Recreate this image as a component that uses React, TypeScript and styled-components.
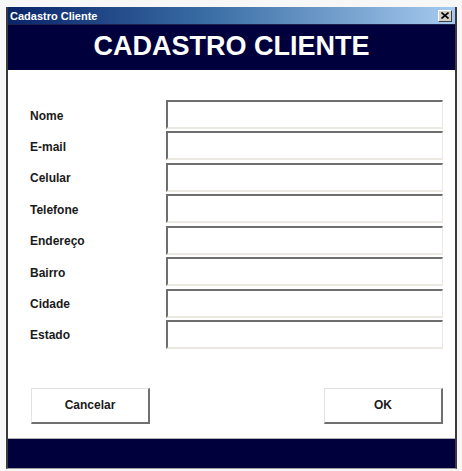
import { Fragment } from "react";
import styled, { createGlobalStyle } from "styled-components";

const GlobalStyle = createGlobalStyle`
    html, body {
        margin: 0;
        padding: 0;
        background: #ffffff;
    }
    body {
        font-family: "Liberation Sans", Arial, sans-serif;
    }
`;

const Frame = styled.div`
    width: 462px;
    height: 471px;
    padding: 7px 0 0 6px;
    box-sizing: border-box;
    background: #f7f7f7;
`;

const Window = styled.div`
    width: 451px;
    display: flex;
    flex-direction: column;
    border-left: 2px solid #3a3a3a;
    border-right: 2px solid #3a3a3a;
    border-bottom: 1px solid #a0a0a0;
    box-sizing: border-box;
    background: #ffffff;
`;

const TitleBar = styled.div`
    height: 17px;
    padding: 0 3px 0 2px;
    display: flex;
    align-items: center;
    justify-content: space-between;
    background: linear-gradient(to right, #0a246a 0%, #3a6ea5 45%, #a6caf0 100%);
`;

const TitleText = styled.span`
    color: #ffffff;
    font-size: 11px;
    font-weight: bold;
`;

const CloseButton = styled.div`
    width: 14px;
    height: 12px;
    display: flex;
    align-items: center;
    justify-content: center;
    background: #d4d0c8;
    border-top: 1px solid #ffffff;
    border-left: 1px solid #ffffff;
    border-right: 1px solid #404040;
    border-bottom: 1px solid #404040;
    box-sizing: border-box;
`;

const Header = styled.div`
    height: 46px;
    display: flex;
    align-items: center;
    justify-content: center;
    background: #00003c;
    border-top: 1px solid #20204a;
    box-sizing: border-box;
`;

const HeaderTitle = styled.h1`
    margin: 0 0 3px 0;
    color: #ffffff;
    font-size: 27px;
    font-weight: bold;
`;

const Body = styled.div`
    height: 368px;
    padding: 30px 12px 0 22px;
    box-sizing: border-box;
    display: flex;
    flex-direction: column;
`;

const Form = styled.div`
    display: grid;
    grid-template-columns: 136px 277px;
    grid-auto-rows: 29px;
    row-gap: 2.43px;
    align-items: center;
`;

const Label = styled.label`
    font-size: 12px;
    font-weight: bold;
    color: #1a1a1a;
    padding-top: 2px;
`;

const Field = styled.input`
    height: 29px;
    width: 277px;
    box-sizing: border-box;
    background: #ffffff;
    border-top: 2px solid #6e6e6e;
    border-left: 2px solid #6e6e6e;
    border-right: 1px solid #ebe9e2;
    border-bottom: 2px solid #ebe9e2;
    outline: none;
    padding: 0 4px;
    font-family: "Liberation Sans", Arial, sans-serif;
    font-size: 12px;
`;

const ButtonRow = styled.div`
    margin-top: 39px;
    padding-left: 1px;
    display: flex;
    justify-content: space-between;
`;

const Button = styled.button`
    width: 119px;
    height: 36px;
    box-sizing: border-box;
    background: #ffffff;
    border-top: 1px solid #e2e2e2;
    border-left: 1px solid #e2e2e2;
    border-right: 2px solid #707070;
    border-bottom: 2px solid #707070;
    font-family: "Liberation Sans", Arial, sans-serif;
    font-size: 12px;
    font-weight: bold;
    color: #1a1a1a;
    padding: 0;
`;

const Footer = styled.div`
    height: 30px;
    background: #00003c;
    border-top: 1px solid #b0b0b0;
    box-sizing: border-box;
`;

const fields = ["Nome", "E-mail", "Celular", "Telefone", "Endereço", "Bairro", "Cidade", "Estado"];

const App = () => {
    return (
        <>
            <GlobalStyle />
            <Frame>
                <Window>
                    <TitleBar>
                        <TitleText>Cadastro Cliente</TitleText>
                        <CloseButton>
                            <svg width="8" height="7" viewBox="0 0 8 7">
                                <path d="M0.5 0.5 L7.5 6.5 M7.5 0.5 L0.5 6.5" stroke="#000" strokeWidth="1.6" />
                            </svg>
                        </CloseButton>
                    </TitleBar>
                    <Header>
                        <HeaderTitle>CADASTRO CLIENTE</HeaderTitle>
                    </Header>
                    <Body>
                        <Form>
                            {fields.map((f) => (
                                <Fragment key={f}>
                                    <Label>{f}</Label>
                                    <Field />
                                </Fragment>
                            ))}
                        </Form>
                        <ButtonRow>
                            <Button>Cancelar</Button>
                            <Button>OK</Button>
                        </ButtonRow>
                    </Body>
                    <Footer />
                </Window>
            </Frame>
        </>
    );
};

export default App;
